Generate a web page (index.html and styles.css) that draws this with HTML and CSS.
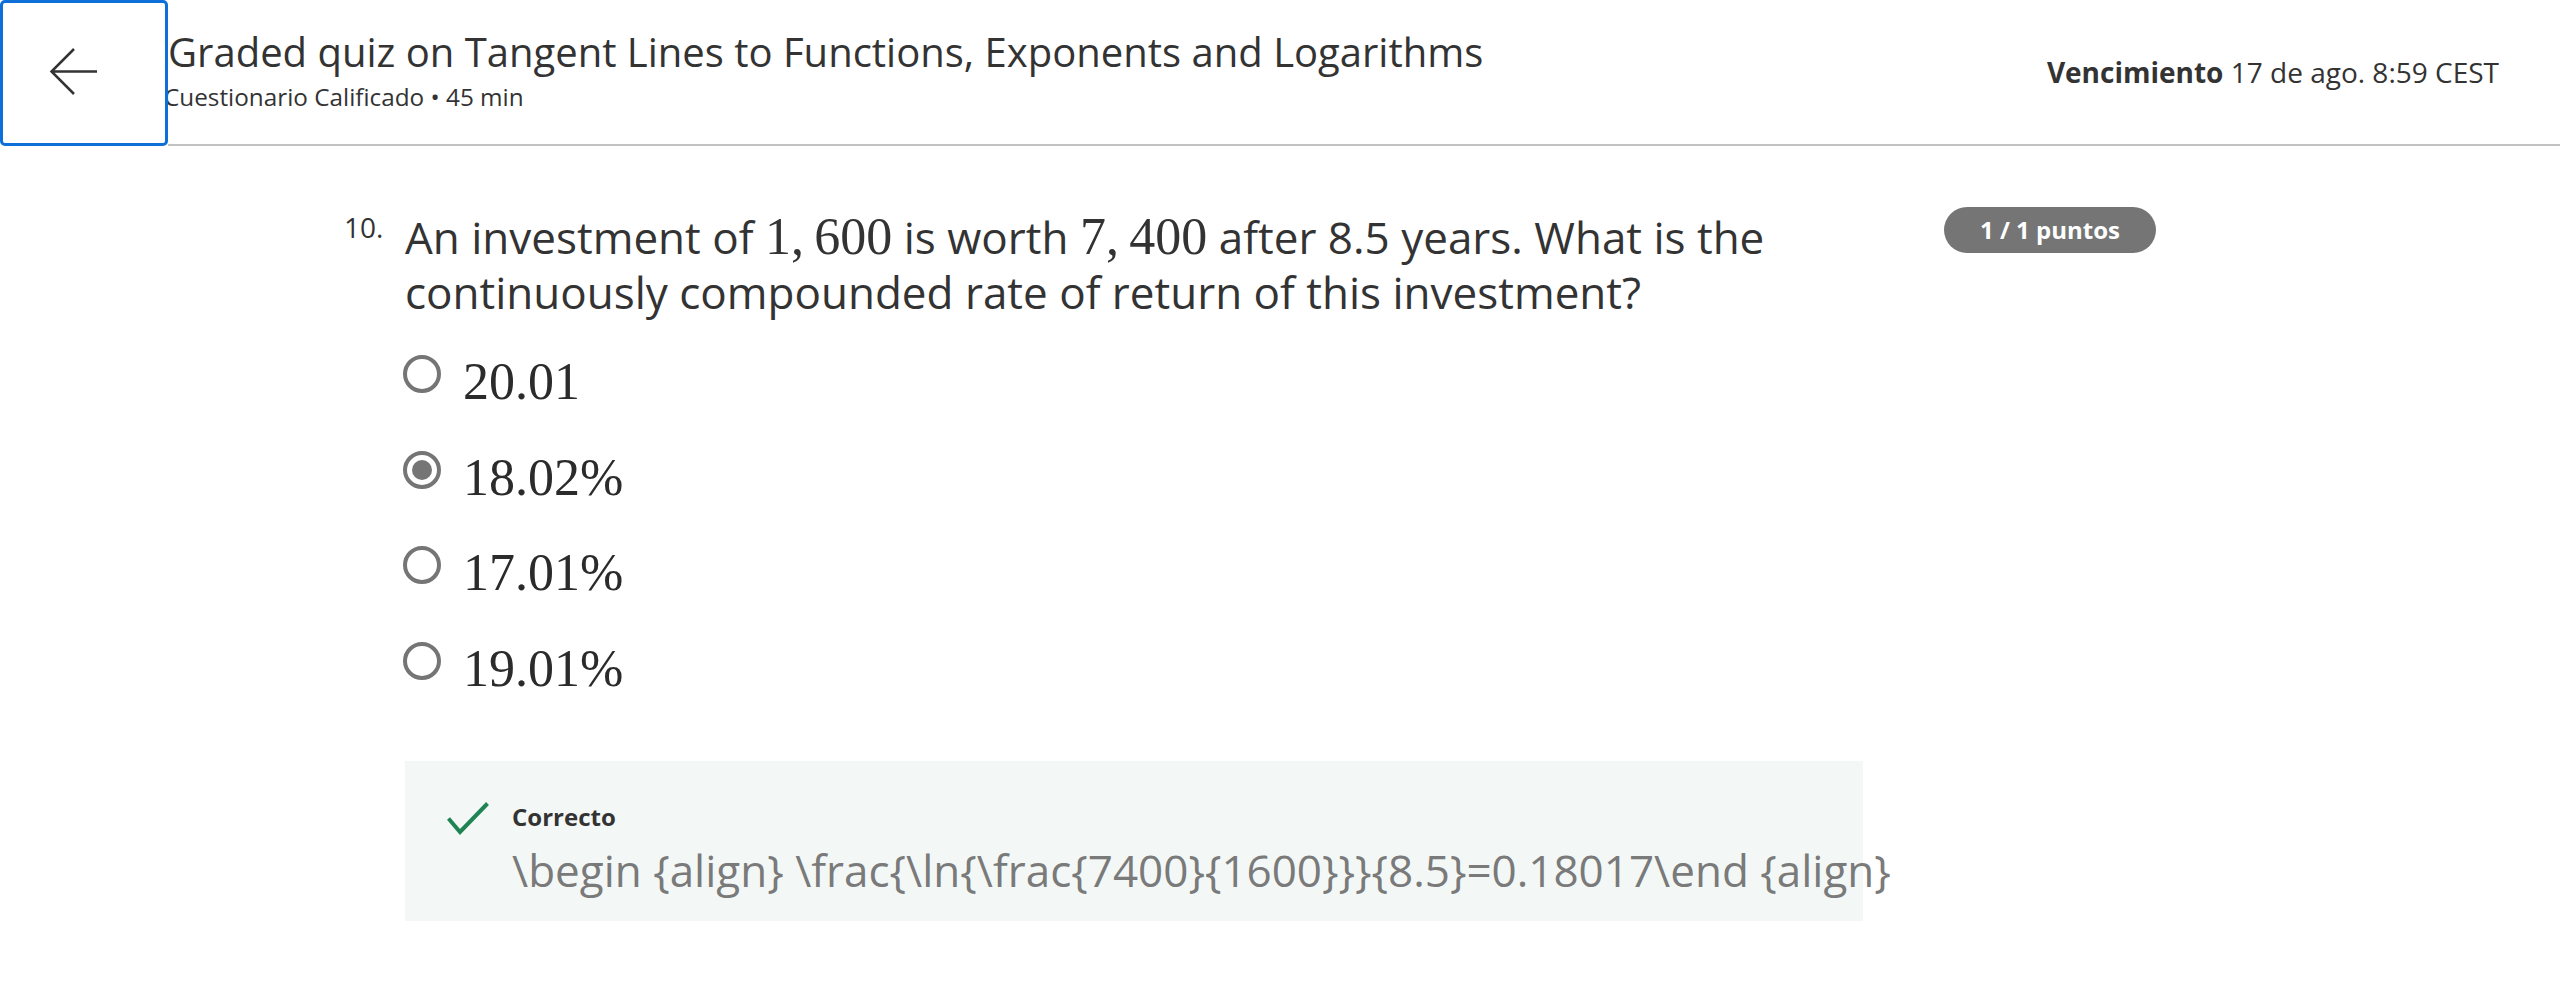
FILE: index.html
```html
<!DOCTYPE html>
<html lang="es">
<head>
<meta charset="utf-8">
<title>Graded quiz</title>
<link rel="stylesheet" href="styles.css">
</head>
<body>
<header class="topbar">
  <button class="back" aria-label="Volver">
    <svg class="back-icon" width="50" height="50" viewBox="0 0 50 50" aria-hidden="true">
      <path d="M49 24.5H3.5M26 2L3.5 24.5L26 47" fill="none" stroke="#333" stroke-width="2.5"/>
    </svg>
  </button>
  <div class="bar">
    <div class="titles">
      <h1 class="title">Graded quiz on Tangent Lines to Functions, Exponents and Logarithms</h1>
      <p class="sub">Cuestionario Calificado • 45 min</p>
    </div>
    <div class="due"><b>Vencimiento</b> 17 de ago. 8:59 CEST</div>
  </div>
</header>

<main class="content">
  <div class="question">
    <div class="qnum">10.</div>
    <div class="qbody">
      <div class="qtext">An investment of <span class="math">1,&thinsp;600</span> is worth <span class="math">7,&thinsp;400</span> after 8.5 years. What is the continuously compounded rate of return of this investment?</div>
      <ul class="options">
        <li class="opt"><span class="radio"></span><span class="otext">20.01</span></li>
        <li class="opt"><span class="radio checked"></span><span class="otext">18.02%</span></li>
        <li class="opt"><span class="radio"></span><span class="otext">17.01%</span></li>
        <li class="opt"><span class="radio"></span><span class="otext">19.01%</span></li>
      </ul>
      <div class="feedback">
        <svg class="check" width="42" height="33" viewBox="0 0 42 33" aria-hidden="true">
          <path d="M1.5 16.5L13 30L40.5 1.5" fill="none" stroke="#1f8354" stroke-width="4"/>
        </svg>
        <div class="fb-text">
          <div class="fb-title">Correcto</div>
          <div class="fb-latex">\begin {align} \frac{\ln{\frac{7400}{1600}}}{8.5}=0.18017\end {align}</div>
        </div>
      </div>
    </div>
    <div class="badge">1 / 1 puntos</div>
  </div>
</main>
</body>
</html>
```

FILE: styles.css
```css
html, body {
  margin: 0;
  padding: 0;
  background: #ffffff;
}

body {
  font-family: "Open Sans", "Noto Sans", sans-serif;
  color: #333333;
}

.topbar {
  display: flex;
  height: 146px;
}

.back {
  flex: 0 0 168px;
  width: 168px;
  height: 146px;
  box-sizing: border-box;
  border: 3px solid #0d6fd8;
  border-radius: 5px;
  background: #ffffff;
  padding: 44px 0 0 45px;
  margin: 0;
  display: flex;
  align-items: flex-start;
  justify-content: flex-start;
  z-index: 1;
  cursor: pointer;
}

.back-icon {
  display: block;
}

.bar {
  flex: 1;
  display: flex;
  height: 146px;
  box-sizing: border-box;
  border-bottom: 2px solid #c2c2c2;
  padding-right: 61px;
}

.titles {
  flex: 1;
  padding-top: 28px;
  min-width: 0;
}

.title {
  margin: 0;
  font-size: 40px;
  line-height: 48px;
  font-weight: 400;
  color: #333333;
  white-space: nowrap;
}

.sub {
  margin: 6px 0 0 -4px;
  font-size: 24.3px;
  line-height: 30px;
  color: #333333;
  white-space: nowrap;
}

.due {
  align-self: center;
  font-size: 28px;
  line-height: 36px;
  color: #333333;
  white-space: nowrap;
}

.due b {
  font-weight: 700;
}

.content {
  padding: 61px 0 0 344px;
}

.question {
  display: flex;
  align-items: flex-start;
}

.qnum {
  flex: 0 0 61px;
  width: 61px;
  padding-top: 3px;
  font-size: 28px;
  line-height: 34px;
  color: #333333;
}

.qbody {
  flex: 0 0 1458px;
  width: 1458px;
}

.qtext {
  padding-top: 3px;
  font-size: 44px;
  line-height: 55px;
  color: #333333;
}

.math {
  font-family: "Liberation Serif", "DejaVu Serif", serif;
  font-size: 52px;
  line-height: 1;
}

.options {
  list-style: none;
  margin: 32px 0 0 0;
  padding: 0;
}

.opt {
  display: flex;
  align-items: flex-start;
  height: 60px;
  margin-bottom: 35.7px;
}

.opt:last-child {
  margin-bottom: 0;
}

.radio {
  flex: 0 0 38px;
  width: 38px;
  height: 38px;
  box-sizing: border-box;
  border: 4px solid #757575;
  border-radius: 50%;
  margin: 3px 0 0 -2px;
  display: flex;
  align-items: center;
  justify-content: center;
}

.radio.checked::after {
  content: "";
  width: 20px;
  height: 20px;
  border-radius: 50%;
  background: #757575;
}

.otext {
  margin-left: 22px;
  font-family: "Liberation Serif", "DejaVu Serif", serif;
  font-size: 52px;
  line-height: 60px;
  color: #2b2b2b;
}

.feedback {
  margin-top: 62px;
  height: 160px;
  box-sizing: border-box;
  background: #f3f8f7;
  padding: 41px 0 0 42px;
  display: flex;
  align-items: flex-start;
}

.check {
  flex: 0 0 42px;
  display: block;
}

.fb-text {
  margin-left: 23px;
}

.fb-title {
  font-size: 24px;
  line-height: 30px;
  font-weight: 700;
  color: #333333;
}

.fb-latex {
  margin-top: 10.5px;
  font-size: 44px;
  line-height: 55px;
  color: #7a7a7a;
  white-space: nowrap;
}

.badge {
  flex: 0 0 212px;
  width: 212px;
  height: 46px;
  margin-left: 81px;
  border-radius: 23px;
  background: #757575;
  color: #ffffff;
  font-size: 24px;
  line-height: 46px;
  font-weight: 700;
  text-align: center;
  white-space: nowrap;
}
```
